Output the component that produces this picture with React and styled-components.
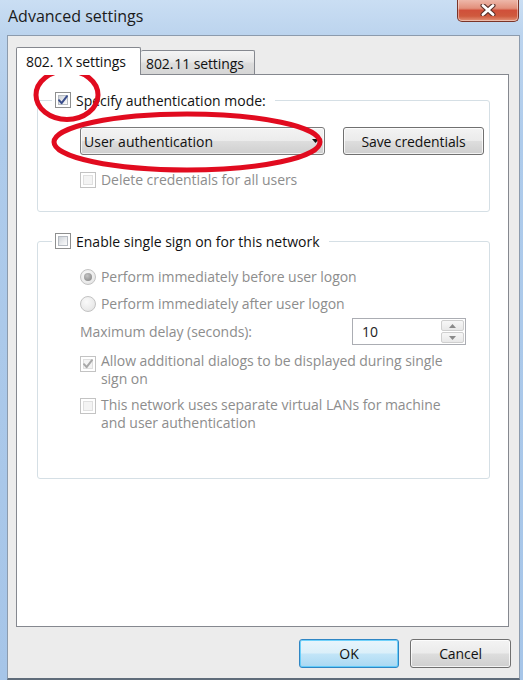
import React from "react";
import styled, { createGlobalStyle, css } from "styled-components";

const Global = createGlobalStyle`
  html, body { margin: 0; padding: 0; background: #a9c7ea; }
  body { font-family: "Open Sans", "Noto Sans", sans-serif; }
  * { box-sizing: border-box; }
`;

const Window = styled.div`
  position: relative;
  width: 523px;
  height: 680px;
  overflow: hidden;
  display: flex;
  flex-direction: column;
  background: linear-gradient(180deg, #cadef3 0px, #bcd4ee 34px, #aecbeb 140px, #a6c5e8 100%);
`;

const TitleBar = styled.div`
  height: 35px;
  flex: none;
  display: flex;
  align-items: flex-start;
  justify-content: space-between;
  padding-left: 8px;
`;

const Title = styled.div`
  margin-top: 5px;
  font-size: 16px;
  line-height: 22px;
  color: #1b1b1b;
`;

const CloseButton = styled.div`
  width: 62px;
  height: 23px;
  margin-top: -1px;
  margin-right: 4px;
  border: 1px solid #7a3428;
  border-top: none;
  border-radius: 0 0 5px 5px;
  background: linear-gradient(180deg, #efbcaf 0%, #e2907c 42%, #d0503a 52%, #cf5a3e 78%, #e39479 100%);
  box-shadow: inset 0 0 0 1px rgba(255, 255, 255, 0.4);
  display: flex;
  align-items: center;
  justify-content: center;
`;

const Client = styled.div`
  flex: 1;
  margin: 0 3px 0 7px;
  background: #ececec;
  border: 1px solid #8c9bad;
  border-bottom: 2px solid #5f6c7a;
  padding: 11px 0 0 8px;
  display: flex;
  flex-direction: column;
`;

const TabStrip = styled.div`
  display: flex;
  align-items: flex-end;
  height: 28px;
  margin-bottom: -1px;
  position: relative;
  z-index: 1;
`;

const Tab = styled.div`
  display: flex;
  align-items: center;
  font-size: 14px;
  letter-spacing: -0.1px;
  color: #111;
  border: 1px solid #85888f;
  border-bottom: none;
  border-radius: 2px 2px 0 0;
  ${(p) =>
    p.$active
      ? css`
          width: 125px;
          height: 28px;
          padding-left: 9px;
          background: #fff;
        `
      : css`
          width: 114px;
          height: 24px;
          margin-bottom: 1px;
          padding-left: 5px;
          padding-top: 2px;
          border-left: none;
          background: linear-gradient(180deg, #f4f4f4 0%, #e9e9e9 45%, #dcdcdc 55%, #d6d6d6 100%);
        `}
`;

const Dot = styled.span`
  margin-right: ${(p) => p.$w}px;
`;

const TabPanel = styled.div`
  width: 493px;
  height: 553px;
  flex: none;
  background: #fff;
  border: 1px solid #85888f;
  padding: 16px 0 0 20px;
`;

const Group = styled.fieldset`
  width: 453px;
  margin: ${(p) => (p.$gap ? `${p.$gap}px 0 0 0` : "0")};
  padding: 0;
  min-width: 0;
  border: 1px solid #d5dfe5;
  border-radius: 3px;
`;

const Legend = styled.legend`
  display: flex;
  align-items: center;
  gap: 5px;
  height: 18px;
  margin-left: 14px;
  padding: 0 9px 0 3px;
  font-size: 14px;
  letter-spacing: 0;
  color: #111;
`;

const GroupBody = styled.div`
  display: flex;
  flex-direction: column;
  padding: ${(p) => p.$pad};
`;

const Row = styled.div`
  display: flex;
  align-items: ${(p) => (p.$top ? "flex-start" : "center")};
  gap: ${(p) => (p.$gap ?? 5)}px;
  min-height: 18px;
  margin-top: ${(p) => p.$mt || 0}px;
`;

const Label = styled.span`
  font-size: 14px;
  letter-spacing: -0.05px;
  line-height: 18px;
  color: ${(p) => (p.$disabled ? "#8d8d8d" : "#111")};
  ${(p) => p.$width && `width: ${p.$width}px;`}
  ${(p) => p.$grow && "flex: 1;"}
`;

const Box = styled.span`
  position: relative;
  flex: none;
  width: 16px;
  height: 16px;
  margin-top: ${(p) => p.$mt || 0}px;
  border: 1px solid ${(p) => (p.$disabled ? "#c3c3c3" : "#8e8f8f")};
  background: #fff;
  display: flex;
  align-items: center;
  justify-content: center;
  &::before {
    content: "";
    position: absolute;
    inset: 2px;
    border: 1px solid ${(p) => (p.$disabled ? "#e0e0e0" : "#b6bbc2")};
    background: ${(p) =>
      p.$disabled
        ? "#f4f4f4"
        : "linear-gradient(135deg, #cdd2d8 0%, #e9ebee 55%, #fbfbfb 100%)"};
  }
  svg {
    position: relative;
  }
`;

const Radio = styled.span`
  position: relative;
  flex: none;
  width: 16px;
  height: 16px;
  border-radius: 50%;
  border: 1px solid #c3c3c3;
  background: radial-gradient(circle at 40% 35%, #fafafa 0%, #ebebeb 60%, #dedede 100%);
  &::after {
    content: "";
    display: ${(p) => (p.$checked ? "block" : "none")};
    position: absolute;
    left: 3px;
    top: 3px;
    width: 8px;
    height: 8px;
    border-radius: 50%;
    background: radial-gradient(circle at 40% 35%, #c4c4c4 0%, #9a9a9a 60%, #7e7e7e 100%);
  }
`;

const Combo = styled.div`
  width: 245px;
  height: 28px;
  display: flex;
  align-items: center;
  justify-content: space-between;
  padding: 0 4px 0 3px;
  border: 1px solid #7a7a7a;
  border-radius: 3px;
  background: linear-gradient(180deg, #f3f3f3 0%, #ececec 48%, #dddddd 52%, #cfcfcf 100%);
  box-shadow: inset 0 0 0 1px rgba(255, 255, 255, 0.7);
  font-size: 14px;
  color: #111;
`;

const Button = styled.div`
  width: ${(p) => p.$w}px;
  height: ${(p) => p.$h || 29}px;
  display: flex;
  align-items: center;
  justify-content: center;
  font-size: 14px;
  letter-spacing: -0.1px;
  color: #111;
  border-radius: 3px;
  border: 1px solid ${(p) => (p.$primary ? "#2f86c4" : "#707070")};
  background: ${(p) =>
    p.$primary
      ? "linear-gradient(180deg, #e8f5fc 0%, #dbeff9 48%, #c2e5f8 52%, #a9d8f2 100%)"
      : "linear-gradient(180deg, #f3f3f3 0%, #ebebeb 48%, #dddddd 52%, #cfcfcf 100%)"};
  box-shadow: inset 0 0 0 1px
    ${(p) => (p.$primary ? "rgba(80, 200, 250, 0.8)" : "rgba(255, 255, 255, 0.75)")};
`;

const Spin = styled.div`
  width: 114px;
  height: 27px;
  margin-right: 23px;
  border: 1px solid #abadb3;
  background: #fff;
  display: flex;
  align-items: center;
  justify-content: space-between;
  padding: 0 1px 0 9px;
  font-size: 14px;
  color: #222;
`;

const SpinButtons = styled.div`
  display: flex;
  flex-direction: column;
  gap: 1px;
`;

const SpinButton = styled.div`
  width: 23px;
  height: 11px;
  border: 1px solid #cfcfcf;
  border-radius: 2px;
  background: linear-gradient(180deg, #f7f7f7, #e8e8e8);
  display: flex;
  align-items: center;
  justify-content: center;
`;

const ButtonRow = styled.div`
  display: flex;
  justify-content: flex-end;
  gap: 11px;
  padding: 12px 8px 0 0;
`;

const Annotations = styled.svg`
  position: absolute;
  left: 0;
  top: 0;
  pointer-events: none;
`;

const Check = ({ disabled }) => (
  <svg width="12" height="12" viewBox="0 0 12 12">
    <path
      d="M2 6.2 L4.6 9.2 L10 2.2"
      fill="none"
      stroke={disabled ? "#a8a8a8" : "#3a4e8c"}
      strokeWidth="2"
      strokeLinecap="round"
      strokeLinejoin="round"
    />
  </svg>
);

const CheckBox = ({ checked, disabled, mt }) => (
  <Box $disabled={disabled} $mt={mt}>
    {checked && <Check disabled={disabled} />}
  </Box>
);

export default function App() {
  return (
    <>
      <Global />
      <Window>
        <TitleBar>
          <Title>Advanced settings</Title>
          <CloseButton>
            <svg width="16" height="12" viewBox="0 0 16 12">
              <path d="M3 1.5 L13 10.5 M13 1.5 L3 10.5" stroke="#5a3029" strokeWidth="5" strokeLinecap="round" />
              <path d="M3 1.5 L13 10.5 M13 1.5 L3 10.5" stroke="#ffffff" strokeWidth="2.8" strokeLinecap="round" />
            </svg>
          </CloseButton>
        </TitleBar>
        <Client>
          <TabStrip>
            <Tab $active>
              802.<Dot $w={3} />1X settings
            </Tab>
            <Tab>
              802.<Dot $w={1} />11 settings
            </Tab>
          </TabStrip>
          <TabPanel>
            <Group>
              <Legend>
                <CheckBox checked />
                Specify authentication mode:
              </Legend>
              <GroupBody $pad="18px 0 22px 42px">
                <Row $gap={18}>
                  <Combo>
                    User authentication
                    <svg width="8" height="5" viewBox="0 0 8 5">
                      <path d="M0 0 H7 L3.5 4 Z" fill="#111" />
                    </svg>
                  </Combo>
                  <Button $w={141} $h={28}>Save credentials</Button>
                </Row>
                <Row $mt={16}>
                  <CheckBox disabled />
                  <Label $disabled>Delete credentials for all users</Label>
                </Row>
              </GroupBody>
            </Group>
            <Group $gap={20}>
              <Legend>
                <CheckBox />
                Enable single sign on for this network
              </Legend>
              <GroupBody $pad="18px 0 46px 42px">
                <Row>
                  <Radio $checked />
                  <Label $disabled>Perform immediately before user logon</Label>
                </Row>
                <Row $mt={9}>
                  <Radio />
                  <Label $disabled>Perform immediately after user logon</Label>
                </Row>
                <Row $mt={5}>
                  <Label $disabled $grow>Maximum delay (seconds):</Label>
                  <Spin>
                    10
                    <SpinButtons>
                      <SpinButton>
                        <svg width="7" height="4" viewBox="0 0 7 4">
                          <path d="M0 4 H7 L3.5 0 Z" fill="#8a8a8a" />
                        </svg>
                      </SpinButton>
                      <SpinButton>
                        <svg width="7" height="4" viewBox="0 0 7 4">
                          <path d="M0 0 H7 L3.5 4 Z" fill="#8a8a8a" />
                        </svg>
                      </SpinButton>
                    </SpinButtons>
                  </Spin>
                </Row>
                <Row $top $mt={7}>
                  <CheckBox checked disabled mt={4} />
                  <Label $disabled $width={360}>
                    Allow additional dialogs to be displayed during single sign on
                  </Label>
                </Row>
                <Row $top $mt={8}>
                  <CheckBox disabled mt={2} />
                  <Label $disabled $width={360}>
                    This network uses separate virtual LANs for machine and user authentication
                  </Label>
                </Row>
              </GroupBody>
            </Group>
          </TabPanel>
          <ButtonRow>
            <Button $w={100} $primary>OK</Button>
            <Button $w={101}>Cancel</Button>
          </ButtonRow>
        </Client>
        <Annotations width="523" height="680" viewBox="0 0 523 680">
          <ellipse cx="67" cy="95" rx="31" ry="24.5" fill="none" stroke="#e10b1f" strokeWidth="5" />
          <ellipse cx="187" cy="142" rx="133" ry="28" fill="none" stroke="#e10b1f" strokeWidth="5" />
        </Annotations>
      </Window>
    </>
  );
}
